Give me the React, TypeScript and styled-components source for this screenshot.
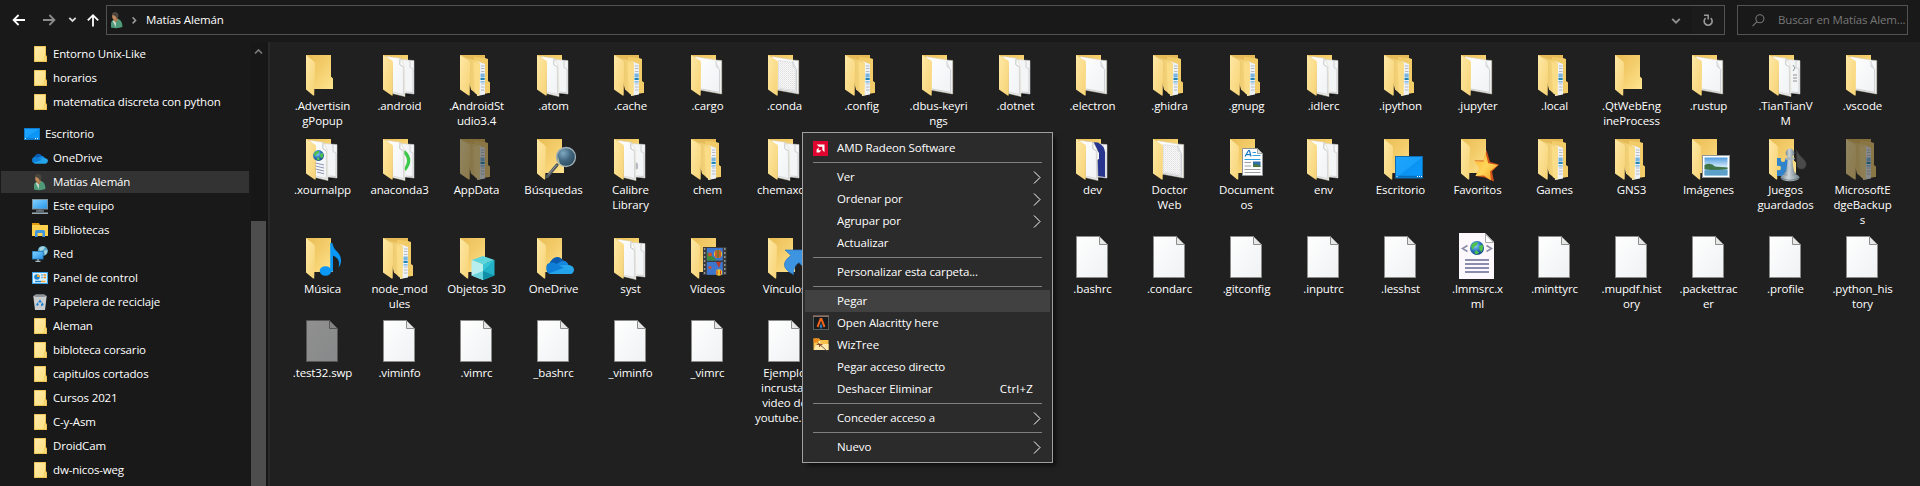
import React from 'react';
import styled, { createGlobalStyle, css } from 'styled-components';

const GlobalStyle = createGlobalStyle`
  * { box-sizing: border-box; }
  html, body { margin: 0; background: #202020; overflow: hidden; }
  body {
    font-family: "Open Sans", "Noto Sans", sans-serif;
    font-size: 11.5px;
    letter-spacing: -0.12px;
    color: #fff;
  }
  svg { display: block; overflow: visible; flex: none; }
`;

const Window = styled.div`
  display: flex;
  flex-direction: column;
  width: 1920px;
  height: 486px;
  background: #191919;
  overflow: hidden;
`;

const Toolbar = styled.header`
  display: flex;
  align-items: flex-start;
  height: 42px;
  padding: 5px 12px 0 12px;
`;

const NavButtons = styled.nav`
  display: flex;
  align-items: center;
  width: 94px;
  height: 30px;
`;

const AddressBar = styled.div`
  display: flex;
  align-items: center;
  width: 1619px;
  height: 30px;
  border: 1px solid #535353;
  padding-left: 3px;
`;

const Crumb = styled.span`
  margin-left: 7px;
  padding-bottom: 2px;
  flex: 1;
`;

const AddressButton = styled.span<{ $w: number; $shade?: boolean }>`
  display: flex;
  align-items: center;
  justify-content: center;
  width: ${(p) => p.$w}px;
  height: 28px;
  background: ${(p) => (p.$shade ? '#1b1b1b' : 'transparent')};
`;

const SearchBox = styled.div`
  display: flex;
  align-items: center;
  width: 171px;
  height: 30px;
  margin-left: 12px;
  padding-left: 14px;
  border: 1px solid #535353;
  color: #777;
  white-space: nowrap;
  overflow: hidden;
`;

const SearchText = styled.span`
  margin-left: 13px;
  padding-bottom: 2px;
  letter-spacing: -0.15px;
`;

const Body = styled.div`
  display: flex;
  flex: 1;
  min-height: 0;
`;

const Sidebar = styled.aside`
  width: 251px;
  flex: none;
  overflow: hidden;
`;

const TreeRow = styled.div<{ $root?: boolean; $selected?: boolean }>`
  display: flex;
  align-items: center;
  gap: 5px;
  height: 24px;
  margin: ${(p) => (p.$root ? '8px' : '0')} 2px 0 1px;
  padding-left: ${(p) => (p.$root ? 23 : 31)}px;
  white-space: nowrap;
  ${(p) =>
    p.$selected &&
    css`
      background: linear-gradient(#333, #333) 0 1px / 100% 22px no-repeat;
    `}
`;

const TreeLabel = styled.span`
  padding-bottom: 2px;
  letter-spacing: -0.16px;
`;

const Scrollbar = styled.div`
  display: flex;
  flex-direction: column;
  width: 15px;
  flex: none;
  background: #171717;
`;

const ScrollUp = styled.div`
  display: flex;
  justify-content: center;
  padding-top: 6px;
  height: 179px;
`;

const ScrollThumb = styled.div`
  flex: 1;
  background: #4d4d4d;
`;

const Divider = styled.div`
  width: 4px;
  flex: none;
  background: #161616;
  border-right: 2px solid #2a2a2a;
`;

const FileGrid = styled.main`
  flex: 1;
  display: grid;
  grid-template-columns: repeat(21, 77px);
  align-content: start;
  padding: 9px 0 0 14px;
  background: #202020;
`;

const Tile = styled.div`
  display: flex;
  flex-direction: column;
  align-items: center;
  padding-bottom: 7px;
`;

const IconSlot = styled.div<{ $dim?: boolean }>`
  width: 49px;
  height: 47px;
  opacity: ${(p) => (p.$dim ? 0.5 : 1)};
`;

const Label = styled.span`
  line-height: 15px;
  text-align: center;
  white-space: pre;
`;

const Menu = styled.div`
  position: absolute;
  left: 802px;
  top: 132px;
  width: 251px;
  height: 331px;
  padding: 4px 2px;
  background: #2b2b2b;
  border: 1px solid #a0a0a0;
  box-shadow: 4px 4px 4px -1px rgba(0, 0, 0, 0.5);
`;

const MenuItem = styled.div<{ $active?: boolean }>`
  display: flex;
  align-items: center;
  height: 22px;
  padding: 0 9px 0 8px;
  background: ${(p) => (p.$active ? '#414141' : 'transparent')};
`;

const MenuIcon = styled.span`
  width: 24px;
  flex: none;
`;

const MenuText = styled.span`
  flex: 1;
  padding-bottom: 2px;
`;

const Shortcut = styled.span`
  margin-right: 8px;
  padding-bottom: 2px;
  letter-spacing: 0.2px;
`;

const Separator = styled.div`
  height: 1px;
  margin: 3px 8px;
  background: #808080;
`;

/* ---------- shared gradients ---------- */

const DefsSvg = styled.svg`
  position: absolute;
  width: 0;
  height: 0;
`;

const SharedDefs = () => (
  <DefsSvg>
    <defs>
      <linearGradient id="back" x1="0" y1="0" x2="1" y2="1">
        <stop offset="0" stopColor="#e9bd55" />
        <stop offset="0.45" stopColor="#f3cc6a" />
        <stop offset="1" stopColor="#ffe48f" />
      </linearGradient>
      <linearGradient id="flap" x1="0" y1="0" x2="1" y2="1">
        <stop offset="0" stopColor="#ffe9a6" />
        <stop offset="1" stopColor="#f6d274" />
      </linearGradient>
      <linearGradient id="inner" x1="0" y1="0" x2="1" y2="0">
        <stop offset="0" stopColor="#e3be62" />
        <stop offset="1" stopColor="#fbdc84" />
      </linearGradient>
      <linearGradient id="paper" x1="0" y1="0" x2="1" y2="1">
        <stop offset="0" stopColor="#ffffff" />
        <stop offset="1" stopColor="#eff1f3" />
      </linearGradient>
      <linearGradient id="mini" x1="0" y1="0" x2="1" y2="1">
        <stop offset="0" stopColor="#ffebaa" />
        <stop offset="1" stopColor="#ffdf80" />
      </linearGradient>
      <linearGradient id="screen" x1="0" y1="0" x2="1" y2="1">
        <stop offset="0" stopColor="#1fa4ff" />
        <stop offset="0.5" stopColor="#18a0fb" />
        <stop offset="0.52" stopColor="#0b93f2" />
        <stop offset="1" stopColor="#0a9bff" />
      </linearGradient>
      <linearGradient id="monitor" x1="0" y1="0" x2="1" y2="1">
        <stop offset="0" stopColor="#7fd0ff" />
        <stop offset="1" stopColor="#2a95e8" />
      </linearGradient>
      <radialGradient id="globe" cx="0.4" cy="0.35" r="0.7">
        <stop offset="0" stopColor="#8fd0f5" />
        <stop offset="0.5" stopColor="#2f78c8" />
        <stop offset="1" stopColor="#123f80" />
      </radialGradient>
      <radialGradient id="lens" cx="0.35" cy="0.3" r="0.8">
        <stop offset="0" stopColor="#7fa9c2" />
        <stop offset="0.5" stopColor="#41677f" />
        <stop offset="1" stopColor="#2a4556" />
      </radialGradient>
      <linearGradient id="star" x1="0" y1="0" x2="1" y2="1">
        <stop offset="0" stopColor="#ffb52e" />
        <stop offset="0.5" stopColor="#ffd65a" />
        <stop offset="1" stopColor="#f59a18" />
      </linearGradient>
      <linearGradient id="pawn" x1="0" y1="0" x2="1" y2="0">
        <stop offset="0" stopColor="#75858e" />
        <stop offset="0.4" stopColor="#ccd6db" />
        <stop offset="1" stopColor="#75848c" />
      </linearGradient>
      <linearGradient id="sky" x1="0" y1="0" x2="0" y2="1">
        <stop offset="0" stopColor="#4f9be0" />
        <stop offset="0.5" stopColor="#cfe8f7" />
        <stop offset="0.7" stopColor="#6aa9cf" />
        <stop offset="1" stopColor="#b7dcf0" />
      </linearGradient>
      <pattern id="tinyText" width="2" height="2" patternUnits="userSpaceOnUse">
        <rect width="2" height="2" fill="#f8f8f8" />
        <rect width="1" height="1" fill="#e0e0e0" />
        <rect x="1" y="1" width="1" height="1" fill="#eaeaea" />
      </pattern>
    </defs>
  </DefsSvg>
);

/* ---------- large icons (48px) ---------- */

const Back = () => <path d="M8 4H33V25.5L35 27.5V38H8Z" fill="url(#back)" />;
const Flap = () => <path d="M8 4L16 10.5Q17 11.5 17 13L16.2 44.6L15.2 44.6L8 38.6Z" fill="url(#flap)" />;

const OuterFlap = () => (
  <path d="M8 4L17 9.5Q18 10.3 18 12L17.7 44.6H16.6L8 38.6Z" fill="url(#flap)" />
);

const TwoPages = ({ rear }: { rear?: React.ReactNode }) => (
  <>
    <path d="M8 4H33V14H8Z" fill="url(#back)" />
    <path d="M39 42L33 45L18 43Z" fill="#000" opacity="0.35" />
    <path d="M20 8L35.5 9.3L39 9.6V43L30 42L20 40Z" fill="#f4f5f6" stroke="#cfcfcf" strokeWidth="0.5" />
    <path d="M35 9.5V16.5L38 18V41.5L31 41" fill="none" stroke="#c4c6c8" strokeWidth="0.8" />
    {rear}
    <path d="M11 5.3L25.5 7.2L29 14.5L30 45.5L17.5 42.5V12Z" fill="url(#paper)" stroke="#d9d0b4" strokeWidth="0.5" />
    <path d="M25 7.4L24.8 13.6L28.3 15.8" fill="#fff" stroke="#b9babb" strokeWidth="0.9" />
    <path d="M28.3 16L28.6 43.6L18.5 41.2" fill="none" stroke="#c9cbcc" strokeWidth="0.7" />
    <OuterFlap />
  </>
);

const OnePage = ({ dotted }: { dotted?: boolean }) => (
  <>
    <path d="M8 4H33V14H8Z" fill="url(#back)" />
    <path d="M12 5.5L34.5 9.2L38.7 9.5V43L17 39Z" fill="url(#paper)" stroke="#d5ccb2" strokeWidth="0.5" />
    {dotted && <path d="M18.5 9.5L33.5 11.5L35.5 17V39.5L18.5 37Z" fill="url(#tinyText)" stroke="#c8c8c8" strokeWidth="0.4" />}
    <path d="M33 10L33.2 15.6Q35.5 17 36.6 18.5V41.4L18 38" fill="none" stroke="#c2c4c6" strokeWidth="0.8" />
    <path d="M33 10L33.2 15.6L36.6 18.3Z" fill="#dcdddf" />
    <OuterFlap />
  </>
);

const NestedFolders = () => (
  <>
    <path d="M8 4H33V14H8Z" fill="#e6bb57" />
    <path d="M33 7L36 8V30L38 31.5V42L30 43L22 40V6Z" fill="#f3cc6a" />
    <path d="M36 42.5L40 42L34 44.5Z" fill="#000" opacity="0.4" />
    <path d="M25 10L33 13V43.5L25 45Z" fill="#eef2f5" />
    <path d="M29 15H32.5M29 17.5H32.5M29 20.5H32.5M29 33H32.5M29 36H32.5M29 39H32.5" stroke="#9aa4ac" strokeWidth="0.7" />
    <rect x="28.5" y="22.5" width="4.2" height="4" fill="#79b4de" />
    <rect x="28.5" y="27" width="4.2" height="2" fill="#2385b5" />
    <rect x="28.5" y="30" width="4.2" height="1.6" fill="#84bfe8" />
    <path d="M10 5L22.5 9.3L27 11Q28 12 28 14L27.6 44.5H26L19 38.5Z" fill="url(#inner)" />
    <path d="M21.5 11L23 42L27 44.5L27.7 13Z" fill="#fbdd88" />
    <OuterFlap />
  </>
);

const GlobeArt = ({ x, y, r }: { x: number; y: number; r: number }) => (
  <g transform={`translate(${x} ${y}) scale(${r / 7})`}>
    <circle r="7" fill="url(#globe)" />
    <path d="M-5.5 -3Q-3 -6.6 1 -6L0 -3L-3 -1L-4 2Q-6.5 0 -5.5 -3ZM2 -2L5.5 -3.5Q7 0 4.5 4L2.5 2ZM-1 2L2 4.5L0 6.4L-2.5 5Z" fill="#4fc24a" />
  </g>
);

const FileShape = () => (
  <>
    <path d="M8.5 2.5H31.5L39.5 10.5V43.5H8.5Z" fill="url(#paper)" stroke="#8c8c8a" />
    <path d="M31.5 2.5V10.5H39.5Z" fill="#e6e6e6" stroke="#8c8c8a" />
  </>
);

const Cloud = () => (
  <g>
    <path d="M3 14.5C0 14.5 -0.5 9.5 4 9C5 5 11 3 14.5 7Q19 5.5 21 9.5L10 18Q4 18 3 14.5Z" fill="#0f6cbd" />
    <path d="M5.5 6.5C8 2 14.5 1.5 17.5 7L10 11L3.5 8.5Z" fill="#0a5bb0" />
    <path d="M14 8C18 5.5 22 7.5 22.5 11L26 12.5L12 16L7 12Z" fill="#1587dc" />
    <path d="M12 11.5L22 11Q28 11.5 28 16Q27.5 20 23.5 20H5Q1 19.5 0.5 16Z" fill="#28a8ea" />
    <path d="M0.3 15.5Q-0.5 10 5.5 8.6Q8.5 8.4 10.5 10L19 14.5L3 19.5Q0.8 18.5 0.3 15.5Z" fill="#0f7ed6" />
    <path d="M3 19.5L18 13.5L27 18.5Q25.5 20 23.5 20H5.5Q4 20 3 19.5Z" fill="#22a3ea" />
  </g>
);

type Kind =
  | 'empty' | 'docs' | 'doc' | 'dotted' | 'nested' | 'web' | 'ring' | 'search' | 'calibre' | 'binder'
  | 'documents' | 'desktop' | 'star' | 'pictures' | 'games' | 'music' | 'cube' | 'cloud' | 'video'
  | 'link' | 'file' | 'xml' | 'tiantian';

const overlay: Partial<Record<Kind, React.ReactNode>> = {
  search: (
    <>
      <path d="M28 30L20 39.5L18.2 41.5" stroke="#4d565c" strokeWidth="3.2" strokeLinecap="round" />
      <path d="M27.5 30L19.5 39.5" stroke="#9aa4aa" strokeWidth="0.9" />
      <circle cx="37" cy="22" r="9.5" fill="url(#lens)" stroke="#9fb0b9" strokeWidth="1.3" />
      <path d="M28.5 20L31 29L34 31Q28 29 28.5 20Z" fill="#d6dfa6" opacity="0.8" />
    </>
  ),
  documents: (
    <>
      <path d="M20.5 13.5H35.5L40.5 18.5V40.5H20.5Z" fill="#fff" stroke="#8f9496" />
      <path d="M35.5 13.5V18.5H40.5Z" fill="#dfe3e6" stroke="#8f9496" strokeWidth="0.8" />
      <path d="M23 21.5L26.5 15.5H27.5L29 21.5M24.5 19.7H28.2" fill="none" stroke="#1477c4" strokeWidth="1.2" />
      <path d="M30.5 17.5H34M30.5 20.5H38.5M22.5 24.5H38.5" stroke="#2ba0e0" />
      <path d="M22.5 27.5H29M22.5 31H29M22.5 34.5H38.5M22.5 37.5H38.5" stroke="#9a9fa2" />
      <rect x="31" y="26.5" width="7.5" height="5.5" fill="#2f6fa8" />
      <path d="M31 32V30L34 29L38.5 31V32Z" fill="#4d7a3a" />
    </>
  ),
  desktop: (
    <>
      <rect x="19.5" y="21.5" width="27" height="21.5" fill="url(#screen)" stroke="#0b6cb0" />
      <path d="M20 41.5H46" stroke="#0a6cb8" strokeWidth="1.5" />
      <path d="M20.5 41.5H21.5M41 41.5H42M43 41.5H44M45 41.5H46" stroke="#fff" />
    </>
  ),
  star: (
    <>
      <path d="M33.5 15L37 27L46 29.5L39 36.5L41 46.5L32 42.5L22.5 41L27 33L21.5 25.5L30.5 25.5Z" fill="#d2541a" />
      <path d="M32.3 17L35.2 28.2L45 30L37 36.5L38 45.5L30.8 40.4L22.5 41L26.5 33L21.5 26L30.3 26.5Z" fill="url(#star)" />
    </>
  ),
  pictures: (
    <>
      <rect x="18.5" y="20.5" width="27" height="22" fill="#fff" stroke="#8f9496" />
      <rect x="20.5" y="22.5" width="23" height="18" fill="url(#sky)" />
      <path d="M20.5 30Q27 27 31 31.5L43.5 32.5V34L30 35.5L20.5 34Z" fill="#3f7446" />
      <path d="M20.5 40.5V36Q30 34 43.5 35.5V40.5Z" fill="#5aa0c8" />
    </>
  ),
  games: (
    <>
      <path d="M35 14.5Q38 20 44 25.5Q47.5 31 42.5 34Q38 35 36 32Z" fill="#4a4a4a" stroke="#2b2b2b" strokeWidth="0.6" />
      <path d="M16 23H20Q19 27 22 27Q25 27 24 23H30V41H16V35Q20 36 20 33Q20 30 16 31Z" fill="#2f84cc" />
      <ellipse cx="29" cy="42.5" rx="9.5" ry="3.8" fill="url(#pawn)" />
      <path d="M26.5 22H31.5Q31.5 32 34 39H24Q26.5 32 26.5 22Z" fill="url(#pawn)" />
      <ellipse cx="29" cy="39" rx="6.4" ry="2.4" fill="url(#pawn)" />
      <path d="M20 43Q29 47.5 38 43" fill="none" stroke="#5f6e77" strokeWidth="0.8" />
      <ellipse cx="29" cy="23.5" rx="4.8" ry="1.5" fill="#a9b6bd" />
      <circle cx="29" cy="18" r="4.4" fill="url(#pawn)" />
    </>
  ),
  music: (
    <>
      <ellipse cx="27.5" cy="37" rx="5.8" ry="4.8" fill="#0a97f5" />
      <path d="M32.2 9H34.4Q35 14 39.5 18Q45 24 42 31.5L40.5 33.3Q43 25 35 21.5V37.5L32.2 38Z" fill="#0a97f5" />
    </>
  ),
  cube: (
    <>
      <path d="M19.5 26L31 22L42.5 26L31 30.5Z" fill="#5fd6dc" />
      <path d="M19.5 26L31 30.5V46L19.5 41.5Z" fill="#b8eeee" />
      <path d="M42.5 26L31 30.5V46L42.5 41.5Z" fill="#22b1c6" />
      <path d="M19.5 41.5L31 37V46Z" fill="#6bd3dc" />
      <path d="M42.5 41.5L31 37V46Z" fill="#0f8fa8" />
      <path d="M42.5 26L31 37V30.5Z" fill="#35c5d5" />
    </>
  ),
  cloud: <g transform="translate(17 20)"><Cloud /></g>,
  video: (
    <>
      <rect x="20" y="13" width="23.5" height="28" fill="#3a3a3a" />
      <path d="M21.6 14V41M41.8 14V41" stroke="#9a9a9a" strokeWidth="1.4" strokeDasharray="2 2" />
      <rect x="23.8" y="14" width="16" height="12.6" fill="#3c76cf" />
      <rect x="23.8" y="28" width="16" height="12.8" fill="#3c76cf" />
      <circle cx="35" cy="20" r="4" fill="#e8c230" />
      <path d="M33 16.5V23.5M37 16.5V23.5" stroke="#c4322a" strokeWidth="1.4" />
      <path d="M35 16V24" stroke="#222" strokeWidth="1" />
      <path d="M24 18L29 22L34 26.5H24Z" fill="#3c8c3f" />
      <circle cx="27" cy="20.5" r="2" fill="#d0502c" />
      <path d="M33 28H38L36 34Z" fill="#b93a2a" />
      <circle cx="36" cy="38.5" r="3.2" fill="#e8c230" />
      <path d="M34 36.5V40.5M37.5 36.5V40.5" stroke="#c4322a" />
      <circle cx="27" cy="33.5" r="1.6" fill="#d0502c" />
    </>
  ),
  link: (
    <path d="M25 16H46V36L39 28.5Q33 32 33.5 40.5Q22 35 25 28Q26.5 24.5 31 21.5Z" fill="#3d94e0" stroke="#2876bd" strokeWidth="0.7" />
  ),
};

const LargeIcon = ({ kind }: { kind: Kind }) => {
  let art: React.ReactNode;
  switch (kind) {
    case 'docs':
      art = <TwoPages />;
      break;
    case 'doc':
      art = <OnePage />;
      break;
    case 'dotted':
      art = <OnePage dotted />;
      break;
    case 'nested':
      art = <NestedFolders />;
      break;
    case 'tiantian':
      art = <TwoPages rear={<path d="M32 14L34 17L32 20M32 24H36M32 27H36M32 30H36" fill="none" stroke="#7c8b86" strokeWidth="0.9" />} />;
      break;
    case 'calibre':
      art = <TwoPages rear={<ellipse cx="30.5" cy="31" rx="1.6" ry="3.6" fill="#b4bbc1" />} />;
      break;
    case 'ring':
      art = <TwoPages rear={<path d="M29 16.5Q38 25 29.5 35" fill="none" stroke="#3cc84a" strokeWidth="3.2" />} />;
      break;
    case 'binder':
      art = <TwoPages rear={<path d="M16 6.5L30 7.5Q36.5 11 37 17V42L29 41V25L31 24V18L26 10Z" fill="#27358f" />} />;
      break;
    case 'web':
      art = (
        <>
          <TwoPages />
          <GlobeArt x={20.5} y={20.5} r={5.4} />
          <path d="M17.5 28L26 30M17.5 31L26 33M17.5 34L26 36M19 37L26 38.8" stroke="#8086ab" strokeWidth="0.9" />
        </>
      );
      break;
    case 'file':
      art = <FileShape />;
      break;
    case 'xml':
      art = (
        <>
          <path d="M6 -1H32L41 8V45H6Z" fill="#fdf8fc" />
          <path d="M32.5 0V8.5H40.5Z" fill="#fff" stroke="#a9a9a9" />
          <path d="M14.5 11.5L9.5 14.5L14.5 17.5M33.5 11.5L38.5 14.5L33.5 17.5" fill="none" stroke="#8c8cab" strokeWidth="1.6" />
          <GlobeArt x={24} y={14} r={7} />
          <path d="M12 26H36M12 30H36M12 34H36M12 38H36" stroke="#8c8cae" strokeWidth="2" />
        </>
      );
      break;
    default:
      art = (
        <>
          <Back />
          <Flap />
          {overlay[kind]}
        </>
      );
  }
  return (
    <svg width="48" height="48" viewBox="0 0 48 48" fill="none">
      {art}
    </svg>
  );
};

/* ---------- small icons (16px) ---------- */

const MiniFolder = () => (
  <svg width="16" height="16" viewBox="0 0 16 16">
    <path d="M2 0H14V9.5L15 10.5V16H2Z" fill="#e6b93c" />
    <path d="M2.7 0.7H13.3V15.3H2.7Z" fill="url(#mini)" />
    <path d="M12.6 10.6L14.4 9.8V15.4H12Z" fill="#ffe08a" stroke="#e6b93c" strokeWidth="0.5" />
  </svg>
);

const personArt = (
  <>
    <path d="M2 15.5V11Q2.5 8 5.5 7.5L9.5 7Q13.5 9 13.5 15Q8 17 2 15.5Z" fill="#4f9a78" />
    <path d="M3.6 9L6.8 15.2L7 8Z" fill="#c9dcd0" />
    <path d="M4.6 6L8.4 5.5L9 8L6.6 10.6L4.8 8.4Z" fill="#b27c50" />
    <ellipse cx="5.6" cy="4.2" rx="2.4" ry="3.5" fill="#c08a5c" />
    <path d="M2.6 2.4Q4 -0.6 7.4 0.2Q10.6 1.5 9 6L7.8 7Q7.6 3.6 2.6 2.4Z" fill="#4a453e" />
  </>
);

const smallArt = {
  folder: <MiniFolder />,
  desktop: (
    <svg width="16" height="16" viewBox="0 0 16 16">
      <rect x="0" y="2" width="16" height="12" fill="#0b7cd0" />
      <rect x="1" y="3" width="14" height="9" fill="url(#screen)" />
      <path d="M1 12.6H2M11 12.6H12M13 12.6H14" stroke="#fff" />
    </svg>
  ),
  cloud: (
    <svg width="16" height="16" viewBox="0 0 16 16">
      <g transform="translate(0 2) scale(0.57)"><Cloud /></g>
    </svg>
  ),
  person: (
    <svg width="16" height="16" viewBox="0 0 16 16">
      {personArt}
    </svg>
  ),
  pc: (
    <svg width="16" height="16" viewBox="0 0 16 16">
      <rect x="0" y="1" width="16" height="10.5" fill="#7f929e" />
      <rect x="1" y="2" width="14" height="8.5" fill="url(#monitor)" />
      <path d="M4 13H12" stroke="#9fb2bd" />
      <path d="M6.5 11.5H9.5V13H6.5Z" fill="#6b7b85" />
      <path d="M0 15.2H16" stroke="#a9bac4" strokeWidth="1.4" />
    </svg>
  ),
  library: (
    <svg width="16" height="16" viewBox="0 0 16 16">
      <path d="M0 1H7L8 3H0Z" fill="#e09a12" />
      <path d="M0 3H16V14H0Z" fill="#ffcf4e" />
      <path d="M3 15V9.5Q3 8 4.5 8H11.5Q13 8 13 9.5V15H10.4V11H5.6V15Z" fill="#3f97de" />
    </svg>
  ),
  network: (
    <svg width="16" height="16" viewBox="0 0 16 16">
      <circle cx="10.8" cy="5" r="5" fill="#5aa9c9" />
      <path d="M7 2Q10 -0.5 13 1L11 4L8 5ZM12 5L15.5 4Q15.5 7 13 9Z" fill="#a8d5df" />
      <rect x="0" y="5" width="11.5" height="8.5" fill="#1e6fb0" />
      <rect x="0.7" y="5.7" width="10.1" height="7" fill="url(#monitor)" />
      <path d="M3.5 15.4H8.5M6 13V15" stroke="#a9bac4" strokeWidth="1.2" />
    </svg>
  ),
  control: (
    <svg width="16" height="16" viewBox="0 0 16 16">
      <rect x="0" y="2" width="16" height="12" fill="#3aa5ea" />
      <rect x="1" y="3" width="14" height="10" fill="#d9effb" />
      <circle cx="5" cy="7" r="2.8" fill="#1d84d2" />
      <path d="M5 7V4.2A2.8 2.8 0 0 1 7.8 7Z" fill="#f3a52a" />
      <path d="M9.5 5H10.5M9.5 7.5H10.5" stroke="#1d84d2" strokeWidth="1.5" />
      <path d="M11.5 5H14M11.5 7.5H14" stroke="#e58b2b" strokeWidth="1.5" />
      <path d="M3 11.5H9" stroke="#1d84d2" strokeWidth="1.4" />
      <path d="M9 11.5H13.5" stroke="#f3a52a" strokeWidth="1.4" />
    </svg>
  ),
  recycle: (
    <svg width="16" height="16" viewBox="0 0 16 16">
      <path d="M1.3 2H14.7L13 16H3Z" fill="#c9cdd0" />
      <path d="M1.3 2L4 0.2H12L14.7 2L12 3H4Z" fill="#8e9498" />
      <path d="M8 5.6L10 8.6H6ZM5.6 8.4L6.8 10.6L5 12.2L4.2 10.6ZM10.4 8.4L11.8 10.8L9 12.4V10.4Z" fill="#1d7fd0" />
    </svg>
  ),
};

const AmdIcon = () => (
  <svg width="15" height="15" viewBox="0 0 15 15">
    <rect width="15" height="15" fill="#e0052f" />
    <path d="M3.7 3.5H11.5V11.3L9.3 9.1V5.7H5.9Z" fill="#fff" />
    <path d="M5.7 6.6V9.3H8.4L6.4 11.4H3.6V8.6Z" fill="#fff" />
  </svg>
);

const AlacrittyIcon = () => (
  <svg width="16" height="16" viewBox="0 0 16 16">
    <rect x="0.5" y="1.5" width="15" height="13" fill="#171b1d" stroke="#55605f" />
    <path d="M0 1H16" stroke="#b98a78" strokeWidth="1" />
    <path d="M6.9 3H9.1L12.4 11.5L10.6 12.5L8 5.8L5.4 12.5L3.6 11.5Z" fill="#f0641c" />
    <path d="M8 8L9.2 11.5L8 14.3L6.8 11.5Z" fill="#2d84c4" />
  </svg>
);

const WizTreeIcon = () => (
  <svg width="16" height="16" viewBox="0 0 16 16">
    <path d="M0.5 1.5H6L7.5 3H15.5V13H0.5Z" fill="#f6c04c" />
    <path d="M0.5 1.5H6L7 4L1 6Z" fill="#ef8a1a" />
    <path d="M1 13L3 7H15.5V13Z" fill="#ffe9ad" />
    <path d="M6.5 4V10M3.5 7.5H9.5M4.5 5.5L8.5 9.5" stroke="#7b2d12" strokeWidth="0.8" />
    <path d="M6.5 4V6.5" stroke="#ffffd0" strokeWidth="1.4" />
    <path d="M8 8.5L14.5 14.5" stroke="#5c5550" strokeWidth="0.9" />
  </svg>
);

const SubmenuArrow = () => (
  <svg width="8" height="13" viewBox="0 0 8 13">
    <path d="M1 0.5L7 6.5L1 12.5" fill="none" stroke="#fff" strokeWidth="1" />
  </svg>
);

/* ---------- data ---------- */

type SmallKind = keyof typeof smallArt;

const tree: { icon: SmallKind; text: string; root?: boolean; selected?: boolean }[] = [
  { icon: 'folder', text: 'Entorno Unix-Like' },
  { icon: 'folder', text: 'horarios' },
  { icon: 'folder', text: 'matematica discreta con python' },
  { icon: 'desktop', text: 'Escritorio', root: true },
  { icon: 'cloud', text: 'OneDrive' },
  { icon: 'person', text: 'Matías Alemán', selected: true },
  { icon: 'pc', text: 'Este equipo' },
  { icon: 'library', text: 'Bibliotecas' },
  { icon: 'network', text: 'Red' },
  { icon: 'control', text: 'Panel de control' },
  { icon: 'recycle', text: 'Papelera de reciclaje' },
  { icon: 'folder', text: 'Aleman' },
  { icon: 'folder', text: 'bibloteca corsario' },
  { icon: 'folder', text: 'capitulos cortados' },
  { icon: 'folder', text: 'Cursos 2021' },
  { icon: 'folder', text: 'C-y-Asm' },
  { icon: 'folder', text: 'DroidCam' },
  { icon: 'folder', text: 'dw-nicos-weg' },
];

type Entry = [Kind, string, boolean?] | null;

const entries: Entry[] = [
  ['empty', '.Advertisin\ngPopup'], ['docs', '.android'], ['nested', '.AndroidSt\nudio3.4'], ['docs', '.atom'],
  ['nested', '.cache'], ['doc', '.cargo'], ['dotted', '.conda'], ['nested', '.config'], ['doc', '.dbus-keyri\nngs'],
  ['docs', '.dotnet'], ['doc', '.electron'], ['nested', '.ghidra'], ['nested', '.gnupg'], ['docs', '.idlerc'],
  ['nested', '.ipython'], ['doc', '.jupyter'], ['nested', '.local'], ['empty', '.QtWebEng\nineProcess'],
  ['doc', '.rustup'], ['tiantian', '.TianTianV\nM'], ['doc', '.vscode'],

  ['web', '.xournalpp'], ['ring', 'anaconda3'], ['nested', 'AppData', true], ['search', 'Búsquedas'],
  ['calibre', 'Calibre\nLibrary'], ['nested', 'chem'], ['docs', 'chemaxon'], null, null, null,
  ['binder', 'dev'], ['dotted', 'Doctor\nWeb'], ['documents', 'Document\nos'], ['docs', 'env'],
  ['desktop', 'Escritorio'], ['star', 'Favoritos'], ['nested', 'Games'], ['nested', 'GNS3'],
  ['pictures', 'Imágenes'], ['games', 'Juegos\nguardados'], ['nested', 'MicrosoftE\ndgeBackup\ns', true],

  ['music', 'Música'], ['nested', 'node_mod\nules'], ['cube', 'Objetos 3D'], ['cloud', 'OneDrive'],
  ['docs', 'syst'], ['video', 'Vídeos'], ['link', 'Vínculos'], null, null, null,
  ['file', '.bashrc'], ['file', '.condarc'], ['file', '.gitconfig'], ['file', '.inputrc'], ['file', '.lesshst'],
  ['xml', '.lmmsrc.x\nml'], ['file', '.minttyrc'], ['file', '.mupdf.hist\nory'], ['file', '.packettrac\ner'],
  ['file', '.profile'], ['file', '.python_his\ntory'],

  ['file', '.test32.swp', true], ['file', '.viminfo'], ['file', '.vimrc'], ['file', '_bashrc'],
  ['file', '_viminfo'], ['file', '_vimrc'], ['file', 'Ejemplo\nincrustar\nvideo de\nyoutube.py'],
];

type MenuEntry = { text: string; icon?: React.ReactNode; sub?: boolean; keys?: string; active?: boolean } | '-';

const menu: MenuEntry[] = [
  { text: 'AMD Radeon Software', icon: <AmdIcon /> },
  '-',
  { text: 'Ver', sub: true },
  { text: 'Ordenar por', sub: true },
  { text: 'Agrupar por', sub: true },
  { text: 'Actualizar' },
  '-',
  { text: 'Personalizar esta carpeta...' },
  '-',
  { text: 'Pegar', active: true },
  { text: 'Open Alacritty here', icon: <AlacrittyIcon /> },
  { text: 'WizTree', icon: <WizTreeIcon /> },
  { text: 'Pegar acceso directo' },
  { text: 'Deshacer Eliminar', keys: 'Ctrl+Z' },
  '-',
  { text: 'Conceder acceso a', sub: true },
  '-',
  { text: 'Nuevo', sub: true },
];

/* ---------- app ---------- */

const App = () => (
  <>
    <GlobalStyle />
    <SharedDefs />
    <Window>
      <Toolbar>
        <NavButtons>
          <svg width="94" height="30" viewBox="0 0 94 30" fill="none">
            <path d="M13 15H1.8M6.6 10L1.6 15L6.6 20" stroke="#fff" strokeWidth="1.8" />
            <path d="M31 15H42.2M37.4 10L42.4 15L37.4 20" stroke="#8c8c8c" strokeWidth="1.8" />
            <path d="M57.3 12.8L60.5 16L63.7 12.8" stroke="#d8d8d8" strokeWidth="1.8" />
            <path d="M81 21.5V10.5M75.8 15.4L81 10.2L86.2 15.4" stroke="#fff" strokeWidth="1.8" />
          </svg>
        </NavButtons>
        <AddressBar>
          <svg width="16" height="16" viewBox="1 0 16 16">
            {personArt}
          </svg>
          <svg width="13" height="12" viewBox="0 0 13 12" fill="none">
            <path d="M6.6 3.4L9.6 6.4L6.6 9.4" stroke="#9a9a9a" strokeWidth="1.5" />
          </svg>
          <Crumb>Matías Alemán</Crumb>
          <AddressButton $w={33}>
            <svg width="10" height="10" viewBox="0 0 10 10" fill="none">
              <path d="M1.2 3.8L5 7.6L8.8 3.8" stroke="#8f8f8f" strokeWidth="1.9" />
            </svg>
          </AddressButton>
          <AddressButton $w={32} $shade>
            <svg width="12" height="14" viewBox="0 0 12 14" fill="none">
              <path d="M8.7 5.1A4 4 0 1 1 3.6 5.1" stroke="#9a9a9a" strokeWidth="1.6" />
              <path d="M2 2.2H6.2V6.6" stroke="#9a9a9a" strokeWidth="1.5" />
            </svg>
          </AddressButton>
        </AddressBar>
        <SearchBox>
          <svg width="13" height="13" viewBox="0 0 13 13" fill="none">
            <circle cx="7.9" cy="4.8" r="4" stroke="#777" strokeWidth="1.1" />
            <path d="M5 7.7L0.6 12.2" stroke="#777" strokeWidth="1.1" />
          </svg>
          <SearchText>Buscar en Matías Alem...</SearchText>
        </SearchBox>
      </Toolbar>
      <Body>
        <Sidebar>
          {tree.map((row) => (
            <TreeRow key={row.text} $root={row.root} $selected={row.selected}>
              {smallArt[row.icon]}
              <TreeLabel>{row.text}</TreeLabel>
            </TreeRow>
          ))}
        </Sidebar>
        <Scrollbar>
          <ScrollUp>
            <svg width="9" height="7" viewBox="0 0 9 7" fill="none">
              <path d="M1 5.5L4.5 2L8 5.5" stroke="#7a7a7a" strokeWidth="1.7" />
            </svg>
          </ScrollUp>
          <ScrollThumb />
        </Scrollbar>
        <Divider />
        <FileGrid>
          {entries.map((entry, i) =>
            entry ? (
              <Tile key={i}>
                <IconSlot $dim={entry[2]}>
                  <LargeIcon kind={entry[0]} />
                </IconSlot>
                <Label>{entry[1]}</Label>
              </Tile>
            ) : (
              <Tile key={i} />
            ),
          )}
        </FileGrid>
      </Body>
    </Window>
    <Menu>
      {menu.map((item, i) =>
        item === '-' ? (
          <Separator key={i} />
        ) : (
          <MenuItem key={i} $active={item.active}>
            <MenuIcon>{item.icon}</MenuIcon>
            <MenuText>{item.text}</MenuText>
            {item.keys && <Shortcut>{item.keys}</Shortcut>}
            {item.sub && <SubmenuArrow />}
          </MenuItem>
        ),
      )}
    </Menu>
  </>
);

export default App;
